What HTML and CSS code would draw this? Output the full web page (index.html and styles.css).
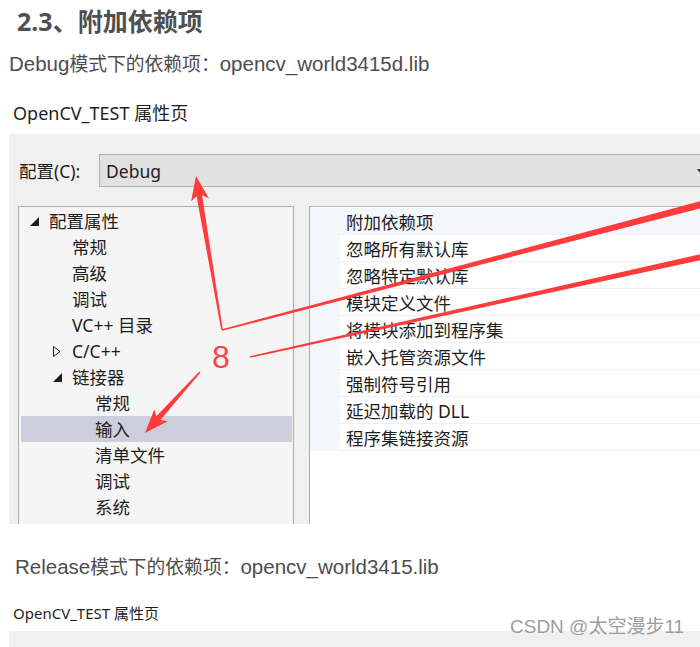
FILE: index.html
```html
<!DOCTYPE html>
<html lang="zh-CN">
<head>
<meta charset="utf-8">
<title>附加依赖项</title>
<link rel="stylesheet" href="styles.css">
</head>
<body>
<div class="page">
  <h2 class="title">2.3、附加依赖项</h2>
  <p class="desc"><span class="en">Debug</span>模式下的依赖项：<span class="en">opencv_world3415d.lib</span></p>
  <div class="cap">OpenCV_TEST 属性页</div>
  <div class="dlg">
    <div class="cfg">
      <span class="cfg-label">配置(C):</span>
      <div class="combo"><span>Debug</span></div>
    </div>
    <div class="panes">
      <div class="tree">
        <div class="node l0"><span class="tog"><svg width="9" height="9" viewBox="0 0 9 9"><polygon points="0,9 9,9 9,0" fill="#1e1e1e"/></svg></span>配置属性</div>
        <div class="node l1"><span class="tog"></span>常规</div>
        <div class="node l1"><span class="tog"></span>高级</div>
        <div class="node l1"><span class="tog"></span>调试</div>
        <div class="node l1"><span class="tog"></span>VC++ 目录</div>
        <div class="node l1"><span class="tog"><svg width="8" height="11" viewBox="0 0 8 11"><polygon points="0.5,0.5 7,5.5 0.5,10.5" fill="none" stroke="#1e1e1e" stroke-width="1"/></svg></span>C/C++</div>
        <div class="node l1"><span class="tog"><svg width="9" height="9" viewBox="0 0 9 9"><polygon points="0,9 9,9 9,0" fill="#1e1e1e"/></svg></span>链接器</div>
        <div class="node l2"><span class="tog"></span>常规</div>
        <div class="node l2 sel"><span class="tog"></span>输入</div>
        <div class="node l2"><span class="tog"></span>清单文件</div>
        <div class="node l2"><span class="tog"></span>调试</div>
        <div class="node l2"><span class="tog"></span>系统</div>
      </div>
      <div class="props">
        <div class="prow psel"><span class="gut"></span><span class="pname">附加依赖项</span></div>
        <div class="prow"><span class="gut"></span><span class="pname">忽略所有默认库</span></div>
        <div class="prow"><span class="gut"></span><span class="pname">忽略特定默认库</span></div>
        <div class="prow"><span class="gut"></span><span class="pname">模块定义文件</span></div>
        <div class="prow"><span class="gut"></span><span class="pname">将模块添加到程序集</span></div>
        <div class="prow"><span class="gut"></span><span class="pname">嵌入托管资源文件</span></div>
        <div class="prow"><span class="gut"></span><span class="pname">强制符号引用</span></div>
        <div class="prow"><span class="gut"></span><span class="pname">延迟加载的 DLL</span></div>
        <div class="prow"><span class="gut"></span><span class="pname">程序集链接资源</span></div>
      </div>
    </div>
  </div>
  <p class="desc desc2"><span class="en">Release</span>模式下的依赖项：<span class="en">opencv_world3415.lib</span></p>
  <div class="cap cap2">OpenCV_TEST 属性页</div>
  <div class="dlg2">
    <div class="edge edge-a"></div>
    <div class="edge edge-b"></div>
  </div>
  <div class="watermark">CSDN @太空漫步11</div>
  <svg class="marks" width="700" height="647" viewBox="0 0 700 647">
    <g fill="#ff3b3b">
      <polygon transform="translate(196 176) rotate(-99.6)" points="-156,-0.8 -20,-2.8 -24,-9 0,0 -24,9 -20,2.8 -156,0.8"/>
      <polygon transform="translate(222 330) rotate(-14.66)" points="0,-0.8 520,-3.6 520,3.6 0,0.8"/>
      <polygon transform="translate(250 357) rotate(-12.5)" points="0,-0.8 500,-3 500,3 0,0.8"/>
      <polygon transform="translate(145 433) rotate(132)" points="-82,-0.8 -20,-2.8 -24,-9 0,0 -24,9 -20,2.8 -82,0.8"/>
    </g>
    <text x="221" y="368" text-anchor="middle" class="eight">8</text>
  </svg>
</div>
</body>
</html>
```

FILE: styles.css
```css
html, body {
  margin: 0;
  padding: 0;
  background: #ffffff;
}
body {
  width: 700px;
  height: 647px;
  overflow: hidden;
}
.page {
  position: relative;
  width: 700px;
  height: 647px;
  overflow: hidden;
}
.title {
  margin: 0;
  padding: 6px 0 0 17px;
  font-family: "Noto Sans", "Noto Sans CJK SC", sans-serif;
  font-weight: 700;
  font-size: 25px;
  line-height: 30px;
  color: #4f4f4f;
}
.desc {
  margin: 14px 0 0 9px;
  font-family: "Noto Sans CJK SC", sans-serif;
  font-size: 18.8px;
  line-height: 26px;
  color: #4d4d4d;
  white-space: nowrap;
}
.desc .en {
  font-family: "Liberation Sans", sans-serif;
  font-size: 20.5px;
}
.desc2 {
  margin: 29px 0 0 15px;
}
.cap {
  margin: 24px 0 0 13px;
  font-family: "Noto Sans", "Noto Sans CJK SC", sans-serif;
  font-size: 18px;
  line-height: 24px;
  color: #1e1e1e;
  white-space: nowrap;
}
.cap2 {
  margin: 23px 0 0 13px;
  font-size: 15px;
  line-height: 20px;
}
.dlg {
  margin: 9px 0 0 9px;
  height: 390px;
  background: #f0f0f0;
  padding: 20px 0 0 9px;
  box-sizing: border-box;
  font-family: "Noto Sans", "Noto Sans CJK SC", sans-serif;
  font-size: 17.5px;
  color: #1e1e1e;
  overflow: hidden;
}
.cfg {
  display: flex;
  align-items: center;
  height: 33px;
}
.cfg-label {
  width: 81px;
  padding-left: 1px;
  box-sizing: border-box;
  white-space: nowrap;
}
.combo {
  flex: 1;
  height: 33px;
  box-sizing: border-box;
  border: 1px solid #b2b2b2;
  border-right: none;
  background: #e1e1e1;
  display: flex;
  align-items: center;
  justify-content: space-between;
  padding-left: 6px;
}
.combo::after {
  content: "";
  width: 0;
  height: 0;
  border-top: 4px solid #333;
  border-left: 3px solid transparent;
  border-right: 3px solid transparent;
  margin-right: -3px;
}
.panes {
  display: flex;
  gap: 15px;
  margin-top: 19px;
  height: 318px;
}
.tree {
  width: 276px;
  flex: none;
  box-sizing: border-box;
  border: 1px solid #adadad;
  border-bottom: none;
  background: #f5f5f5;
  padding: 1px 1px 0 1px;
}
.node {
  height: 26px;
  display: flex;
  align-items: center;
  white-space: nowrap;
  line-height: 26px;
}
.tog {
  width: 19px;
  flex: none;
  display: flex;
  align-items: center;
}
.l0 { padding-left: 10px; }
.l1 { padding-left: 33px; }
.l2 { padding-left: 56px; }
.sel {
  background: #cccedb;
  margin: 0 0 0 1px;
  padding-left: 55px;
}
.props {
  flex: 1;
  box-sizing: border-box;
  border-left: 1px solid #adadad;
  border-top: 1px solid #b9b9b9;
  background: #ffffff;
  padding-top: 1px;
}
.prow {
  height: 27px;
  box-sizing: border-box;
  display: flex;
  align-items: center;
  border-bottom: 1px solid #eef1f7;
  white-space: nowrap;
}
.gut {
  width: 30px;
  height: 27px;
  flex: none;
  background: #f3f6fb;
}
.pname {
  padding-left: 6px;
}
.psel {
  background: #f3f6fb;
}
.dlg2 {
  margin: 8px 0 0 9px;
  height: 17px;
  background: #f0f0f0;
  display: flex;
  align-items: flex-end;
}
.edge {
  height: 1px;
  background: #a8a8a8;
}
.edge-a {
  margin-left: 76px;
  width: 500px;
}
.edge-b {
  margin-left: 77px;
  flex: 1;
}
.watermark {
  position: absolute;
  left: 510px;
  top: 616px;
  font-family: "Liberation Sans", "Noto Sans CJK SC", sans-serif;
  font-size: 19px;
  line-height: 22px;
  color: #9c9c9c;
  text-shadow: 0 0 1px #ffffff;
  white-space: nowrap;
}
.marks {
  position: absolute;
  left: 0;
  top: 0;
  pointer-events: none;
}
.eight {
  font-family: "Liberation Sans", sans-serif;
  font-size: 32px;
  fill: #ff4242;
}
```
